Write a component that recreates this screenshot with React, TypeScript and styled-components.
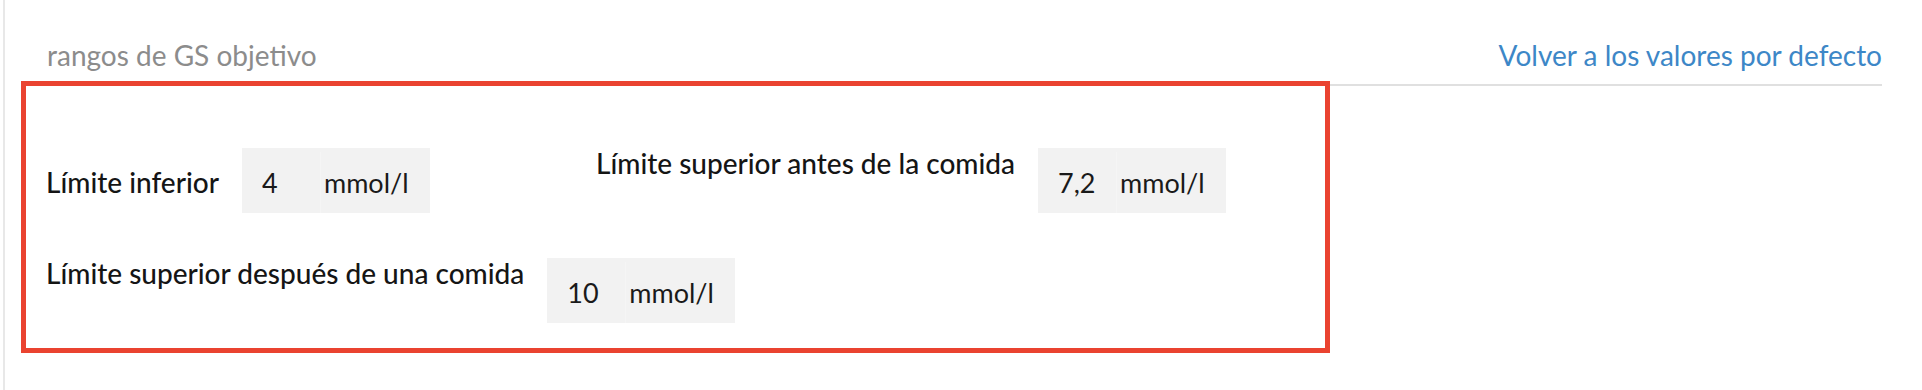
import styled, { createGlobalStyle } from 'styled-components';

type Field = {
  label: string;
  value: string;
  unit: string;
  align: 'center' | 'flex-start';
};

const fields: Field[] = [
  { label: 'Límite inferior', value: '4', unit: 'mmol/l', align: 'center' },
  { label: 'Límite superior antes de la comida', value: '7,2', unit: 'mmol/l', align: 'flex-start' },
  { label: 'Límite superior después de una comida', value: '10', unit: 'mmol/l', align: 'flex-start' },
];

const App = () => {
  return (
    <>
      <GlobalStyle />
      <Page>
        <Header>
          <Title>rangos de GS objetivo</Title>
          <ResetLink href='#'>Volver a los valores por defecto</ResetLink>
        </Header>
        <Highlight>
          <FieldGrid>
            {fields.map((f) => (
              <FieldRow key={f.label} $align={f.align}>
                <Label>{f.label}</Label>
                <InputBox>
                  <ValueInput readOnly defaultValue={f.value} />
                  <Unit>{f.unit}</Unit>
                </InputBox>
              </FieldRow>
            ))}
          </FieldGrid>
        </Highlight>
      </Page>
    </>
  );
};

export default App;

const GlobalStyle = createGlobalStyle`
  html, body {
    margin: 0;
    background: #ffffff;
    font-family: Lato, 'Open Sans', sans-serif;
  }
  * {
    box-sizing: border-box;
  }
`;

const Page = styled.div`
  margin-left: 3px;
  border-left: 2px solid #e8e8e8;
  min-height: 390px;
  padding: 38px 40px 0 16px;
`;

const Header = styled.div`
  display: flex;
  justify-content: space-between;
  align-items: baseline;
  padding: 0 0 12px 26px;
  border-bottom: 2px solid #e0e0e0;
`;

const Title = styled.span`
  font-size: 28px;
  color: #8c8c8c;
`;

const ResetLink = styled.a`
  font-size: 28px;
  color: #3d87c7;
  text-decoration: none;
`;

const Highlight = styled.div`
  margin-top: -5px;
  width: 1309px;
  border: 5px solid #ea4330;
  padding: 62px 0 25px 20px;
`;

const FieldGrid = styled.div`
  display: flex;
  flex-wrap: wrap;
  row-gap: 45px;
`;

const FieldRow = styled.div<{ $align: 'center' | 'flex-start' }>`
  display: flex;
  align-items: ${(p) => p.$align};
  gap: 23px;
  width: 550px;
  span:first-child {
    padding-top: ${(p) => (p.$align === 'center' ? '4px' : '0')};
  }
`;

const Label = styled.span`
  font-size: 28px;
  line-height: 1.1;
  font-weight: 500;
  color: #151515;
  white-space: nowrap;
`;

const InputBox = styled.div`
  display: flex;
  width: 188px;
  height: 65px;
  flex-shrink: 0;
  background: #f2f2f2;
  padding-top: 4px;
`;

const ValueInput = styled.input`
  width: 78px;
  border: none;
  outline: none;
  background: transparent;
  padding: 0 0 0 20px;
  font-family: Lato, sans-serif;
  font-size: 27px;
  color: #1a1a1a;
`;

const Unit = styled.span`
  flex: 1;
  display: flex;
  align-items: center;
  padding-left: 3px;
  border-left: 1px solid #f5f5f5;
  font-size: 27px;
  color: #1a1a1a;
`;
